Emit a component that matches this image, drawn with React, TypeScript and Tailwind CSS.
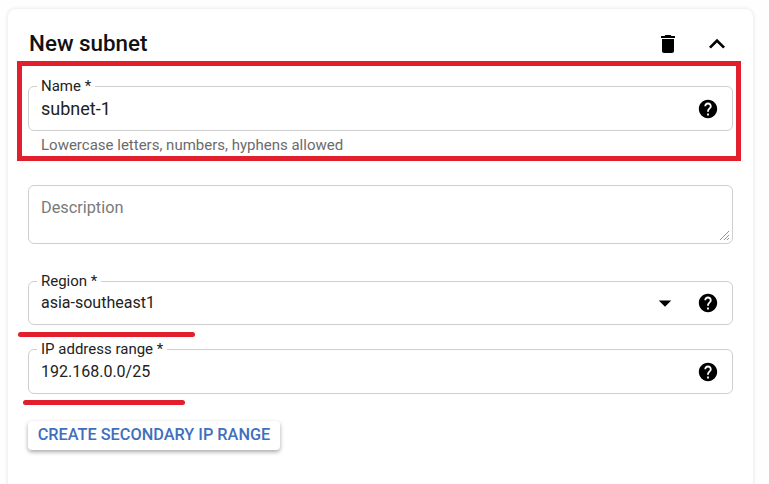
import type { ReactNode } from "react";
import { MdArrowDropDown, MdDelete, MdExpandLess, MdHelp } from "react-icons/md";

const Field = ({
  label,
  value,
  height,
  valueClass = "text-[16px]",
  children,
}: {
  label: string;
  value: string;
  height: string;
  valueClass?: string;
  children?: ReactNode;
}) => {
  return (
    <div className={`relative flex items-center rounded-[6px] border border-[#cfcfcf] pl-3 pr-[13px] ${height}`}>
      <div className="absolute left-[8px] top-[-9px] bg-white px-1 text-[15px] leading-[16px] text-[#222]">
        {label}
      </div>
      <div className={`flex-1 leading-[20px] text-[#222] ${valueClass}`}>{value}</div>
      {children}
      <MdHelp className="text-black" size={22} />
    </div>
  );
};

export default function App() {
  return (
    <div className="relative h-[484px] w-[769px] overflow-hidden bg-[#fefefe] font-['Roboto',sans-serif]">
      <div className="ml-2 mt-[9px] h-[520px] w-[745px] rounded-lg bg-white px-5 shadow-[0_0_4px_rgba(0,0,0,0.12)]">
        <div className="flex h-[52px] items-center pt-[18px]">
          <div className="flex-1 pl-px text-[22.4px] font-medium text-[#111]">New subnet</div>
          <MdDelete className="mr-[21px] text-black" size={24} />
          <MdExpandLess className="text-black" size={32} />
        </div>

        <div className="mt-[25px]">
          <Field label="Name *" value="subnet-1" height="h-[45px]" valueClass="text-[18px]" />
        </div>
        <div className="pl-[13px] pt-[5px] text-[15px] leading-[18px] text-[#6b6b6b]">
          Lowercase letters, numbers, hyphens allowed
        </div>

        <div className="relative mt-[31px] h-[59px] rounded-[6px] border border-[#cfcfcf] pl-3 pt-[12px] text-[16.3px] leading-[20px] text-[#7a7a7a]">
          Description
          <svg className="absolute bottom-[2px] right-[2px]" width="11" height="11" viewBox="0 0 11 11">
            <path d="M1 10 10 1M5 10l5-5M8 10l2-2" stroke="#777" strokeWidth="0.8" fill="none" />
          </svg>
        </div>

        <div className="mt-[37px]">
          <Field label="Region *" value="asia-southeast1" height="h-[44px]">
            <MdArrowDropDown className="mr-[17px] text-black" size={30} />
          </Field>
        </div>
        <div className="mt-[24px]">
          <Field label="IP address range *" value="192.168.0.0/25" height="h-[45px]" />
        </div>

        <button className="mt-[27px] h-[29px] w-[252px] rounded-[4px] bg-white text-[16.3px] font-medium text-[#3f6fbd] shadow-[0_2px_4px_rgba(0,0,0,0.35)]">
          CREATE SECONDARY IP RANGE
        </button>
      </div>

      {/* red annotations drawn over the form */}
      <div className="absolute left-[17px] top-[61px] h-[100px] w-[724px] border-[5px] border-[#e21f2c]" />
      <div className="absolute left-[18px] top-[332px] h-[5px] w-[177px] rounded-full bg-[#e21f2c]" />
      <div className="absolute left-[23px] top-[400px] h-[5px] w-[162px] rounded-full bg-[#e21f2c]" />
    </div>
  );
}
